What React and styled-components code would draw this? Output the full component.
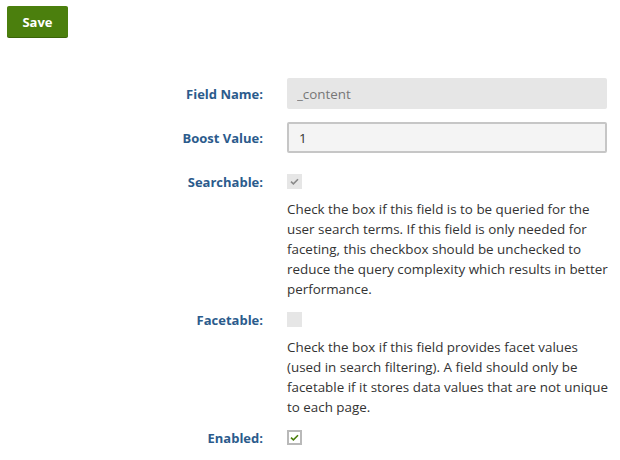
import styled, { createGlobalStyle } from "styled-components";

const Global = createGlobalStyle`
  body {
    margin: 0;
    background: #fff;
    font-family: "Open Sans", "Noto Sans", Arial, sans-serif;
    color: #333;
  }
`;

const Page = styled.div`
  padding: 6px 7px 0;
`;

const SaveBtn = styled.button`
  display: block;
  width: 61px;
  height: 31px;
  border: 0;
  border-radius: 2px;
  background: #4b7f0d;
  box-shadow: 0 1px 0 #3a6408;
  color: #fff;
  font-family: inherit;
  font-size: 13px;
  font-weight: 700;
  cursor: pointer;
`;

const Form = styled.div`
  margin-top: 41px;
  display: flex;
  flex-direction: column;
`;

const Row = styled.div`
  display: grid;
  grid-template-columns: 256px 320px;
  column-gap: 24px;
  align-items: center;
  min-height: 31px;
  margin-bottom: ${(p) => p.gap || 0}px;
`;

const Label = styled.label`
  text-align: right;
  font-size: 13px;
  font-weight: 700;
  color: #2b5b8c;
`;

const Input = styled.input`
  box-sizing: border-box;
  width: 320px;
  height: 31px;
  padding: 0 10px;
  font-family: inherit;
  font-size: 13.4px;
  color: #333;
  background: ${(p) => (p.disabled ? "#e6e6e6" : "#f4f4f4")};
  border: ${(p) => (p.disabled ? "0" : "2px solid #c6c6c6")};
  border-radius: 2px;
  outline: none;
  &:disabled {
    color: #777;
  }
`;

const Box = styled.span`
  box-sizing: border-box;
  display: flex;
  align-items: center;
  justify-content: center;
  width: 15px;
  height: 15px;
  background: ${(p) => (p.disabled ? "#e6e6e6" : "#fff")};
  border: ${(p) => (p.disabled ? "0" : "2px solid #b9b9b9")};
`;

const Help = styled.p`
  margin: 2px 0 ${(p) => p.after}px 280px;
  width: 321px;
  font-size: 13.4px;
  line-height: 20px;
  color: #333;
`;

const Check = ({ color }) => (
  <svg width="9" height="7" viewBox="0 0 9 7">
    <path d="M1 3.6 L3.4 5.8 L8 1.2" fill="none" stroke={color} strokeWidth="1.6" />
  </svg>
);

const Checkbox = ({ checked, disabled }) => (
  <Box disabled={disabled}>
    {checked && <Check color={disabled ? "#8a8a8a" : "#4b7f0d"} />}
  </Box>
);

export default function App() {
  return (
    <Page>
      <Global />
      <SaveBtn>Save</SaveBtn>
      <Form>
        <Row gap={13}>
          <Label>Field Name:</Label>
          <Input disabled value="_content" readOnly />
        </Row>
        <Row gap={13}>
          <Label>Boost Value:</Label>
          <Input value="1" readOnly />
        </Row>
        <Row>
          <Label>Searchable:</Label>
          <Checkbox checked disabled />
        </Row>
        <Help after={5}>
          Check the box if this field is to be queried for the user search
          terms. If this field is only needed for faceting, this checkbox
          should be unchecked to reduce the query complexity which results in
          better performance.
        </Help>
        <Row>
          <Label>Facetable:</Label>
          <Checkbox disabled />
        </Row>
        <Help after={5}>
          Check the box if this field provides facet values (used in search
          filtering). A field should only be facetable if it stores data values
          that are not unique to each page.
        </Help>
        <Row>
          <Label>Enabled:</Label>
          <Checkbox checked />
        </Row>
      </Form>
    </Page>
  );
}
